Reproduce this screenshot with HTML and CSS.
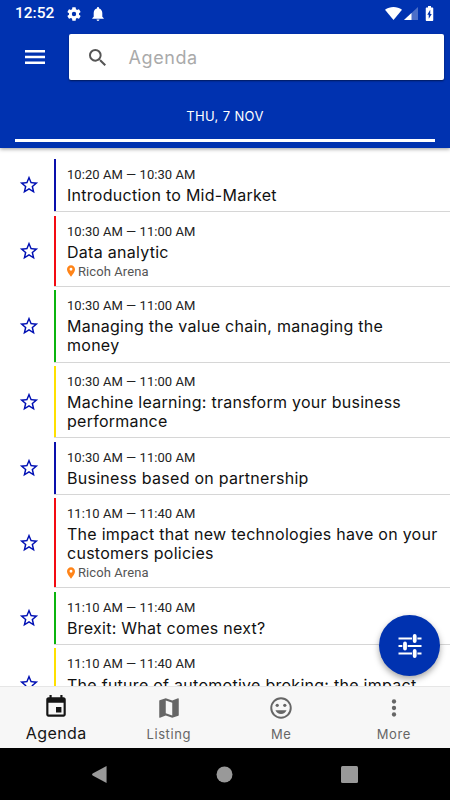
FILE: index.html
```
<!DOCTYPE html>
<html lang="en">
<head>
    <meta charset="UTF-8">
    <title>Agenda</title>
    <link rel="stylesheet" href="styles.css">
</head>
<body>
<svg class="symbols">
    <symbol id="star" viewBox="0 0 24 24"><path d="M22 9.24l-7.19-.62L12 2 9.19 8.63 2 9.24l5.46 4.73L5.82 21 12 17.27 18.18 21l-1.63-7.03L22 9.24zM12 15.4l-3.76 2.27 1-4.28-3.32-2.88 4.38-.38L12 6.1l1.71 4.04 4.38.38-3.32 2.88 1 4.28L12 15.4z"/></symbol>
    <symbol id="pin" viewBox="5 2 14 20"><path d="M12 2C8.13 2 5 5.13 5 9c0 5.25 7 13 7 13s7-7.75 7-13c0-3.87-3.13-7-7-7zm0 9.5a2.5 2.5 0 0 1 0-5 2.5 2.5 0 0 1 0 5z"/></symbol>
</svg>
<div class="phone">
    <header class="header">
        <div class="status">
            <span class="clock">12:52</span>
            <svg class="gear" viewBox="2 2 20 20"><path d="M19.14 12.94c.04-.3.06-.61.06-.94 0-.32-.02-.64-.07-.94l2.03-1.58a.49.49 0 0 0 .12-.61l-1.92-3.32a.488.488 0 0 0-.59-.22l-2.39.96c-.5-.38-1.03-.7-1.62-.94l-.36-2.54a.484.484 0 0 0-.48-.41h-3.84c-.24 0-.43.17-.47.41l-.36 2.54c-.59.24-1.13.57-1.62.94l-2.39-.96c-.22-.08-.47 0-.59.22L2.74 8.87c-.12.21-.08.47.12.61l2.03 1.58c-.05.3-.09.63-.09.94s.02.64.07.94l-2.03 1.58a.49.49 0 0 0-.12.61l1.92 3.32c.12.22.37.29.59.22l2.39-.96c.5.38 1.03.7 1.62.94l.36 2.54c.05.24.24.41.48.41h3.84c.24 0 .44-.17.47-.41l.36-2.54c.59-.24 1.13-.56 1.62-.94l2.39.96c.22.08.47 0 .59-.22l1.92-3.32c.12-.22.07-.47-.12-.61l-2.01-1.58zM12 15.1a3.1 3.1 0 1 1 0-6.2 3.1 3.1 0 0 1 0 6.2z"/></svg>
            <svg class="bell" viewBox="4 2.5 16 19.5"><path d="M12 22c1.1 0 2-.9 2-2h-4c0 1.1.89 2 2 2zm6-6v-5c0-3.07-1.64-5.64-4.5-6.32V4c0-.83-.67-1.5-1.5-1.5s-1.5.67-1.5 1.5v.68C7.63 5.36 6 7.92 6 11v5l-2 2v1h16v-1l-2-2z"/></svg>
            <svg class="wifi" viewBox="0 0 17 13"><path d="M0 2.8C5-.9 12-.9 17 2.8L8.5 13z"/></svg>
            <svg class="signal" viewBox="0 0 14 13"><path opacity=".3" d="M0 13L14 0v13z"/><path d="M0 13l7.5-7v7z"/></svg>
            <svg class="battery" viewBox="7 2 10 20"><path d="M15.67 4H14V2h-4v2H8.33C7.6 4 7 4.6 7 5.33v15.33C7 21.4 7.6 22 8.33 22h7.33c.74 0 1.34-.6 1.34-1.33V5.33C17 4.6 16.4 4 15.67 4zM11 19v-5.5H9L13 7v5.5h2L11 19z"/></svg>
        </div>
        <div class="toolbar">
            <svg class="menu" viewBox="0 0 20 14"><path d="M0 0h20v2.4H0zM0 5.8h20v2.4H0zM0 11.6h20v2.4H0z"/></svg>
            <div class="search">
                <svg viewBox="3 3 17.5 17.5"><path d="M15.5 14h-.79l-.28-.27A6.471 6.471 0 0 0 16 9.5 6.5 6.5 0 1 0 9.5 16c1.61 0 3.09-.59 4.23-1.57l.27.28v.79l5 4.99L20.49 19l-4.99-5zm-6 0C7.01 14 5 11.99 5 9.5S7.01 5 9.5 5 14 7.01 14 9.5 11.99 14 9.5 14z"/></svg>
                <span>Agenda</span>
            </div>
        </div>
        <div class="day"><span>THU, 7 NOV</span></div>
    </header>

    <main class="list">
        <div class="row">
            <svg class="star"><use href="#star"/></svg>
            <div class="session blue">
                <p class="time">10:20 AM — 10:30 AM</p>
                <p class="name">Introduction to Mid-Market</p>
            </div>
        </div>
        <div class="row">
            <svg class="star"><use href="#star"/></svg>
            <div class="session red">
                <p class="time">10:30 AM — 11:00 AM</p>
                <p class="name">Data analytic</p>
                <p class="place"><svg><use href="#pin"/></svg>Ricoh Arena</p>
            </div>
        </div>
        <div class="row">
            <svg class="star"><use href="#star"/></svg>
            <div class="session green">
                <p class="time">10:30 AM — 11:00 AM</p>
                <p class="name">Managing the value chain, managing the<br>money</p>
            </div>
        </div>
        <div class="row">
            <svg class="star"><use href="#star"/></svg>
            <div class="session yellow">
                <p class="time">10:30 AM — 11:00 AM</p>
                <p class="name">Machine learning: transform your business performance</p>
            </div>
        </div>
        <div class="row">
            <svg class="star"><use href="#star"/></svg>
            <div class="session blue">
                <p class="time">10:30 AM — 11:00 AM</p>
                <p class="name">Business based on partnership</p>
            </div>
        </div>
        <div class="row">
            <svg class="star"><use href="#star"/></svg>
            <div class="session red">
                <p class="time">11:10 AM — 11:40 AM</p>
                <p class="name">The impact that new technologies have on your customers policies</p>
                <p class="place"><svg><use href="#pin"/></svg>Ricoh Arena</p>
            </div>
        </div>
        <div class="row">
            <svg class="star"><use href="#star"/></svg>
            <div class="session green">
                <p class="time">11:10 AM — 11:40 AM</p>
                <p class="name">Brexit: What comes next?</p>
            </div>
        </div>
        <div class="row last">
            <svg class="star"><use href="#star"/></svg>
            <div class="session yellow">
                <p class="time">11:10 AM — 11:40 AM</p>
                <p class="name">The future of automotive broking: the impact</p>
            </div>
        </div>
    </main>

    <div class="fab">
        <svg viewBox="0 0 24 24"><path d="M.5 4.5h23M.5 12h23M.5 19.5h23" stroke="#fff" stroke-width="1.8"/><path d="M16.7 0v9M7 7.5v9M16.7 15v9" stroke="#0032b0" stroke-width="5.4"/><path d="M16.7 2v5M7 9.5v5M16.7 17v5" stroke="#fff" stroke-width="3.8" stroke-linecap="round"/></svg>
    </div>

    <nav class="tabs">
        <div class="tab active">
            <svg viewBox="0 0 24 24"><path d="M17 12h-5v5h5v-5zM16 1v2H8V1H6v2H5c-1.11 0-1.99.9-1.99 2L3 19c0 1.1.89 2 2 2h14c1.1 0 2-.9 2-2V5c0-1.1-.9-2-2-2h-1V1h-2zm3 18H5V8h14v11z"/></svg>
            <span>Agenda</span>
        </div>
        <div class="tab">
            <svg viewBox="0 0 24 24"><path d="M20.5 3l-.16.03L15 5.1 9 3 3.36 4.9c-.21.07-.36.25-.36.48V20.5c0 .28.22.5.5.5l.16-.03L9 18.9l6 2.1 5.64-1.9c.21-.07.36-.25.36-.48V3.5c0-.28-.22-.5-.5-.5zM15 19l-6-2.11V5l6 2.11V19z"/></svg>
            <span>Listing</span>
        </div>
        <div class="tab">
            <svg viewBox="0 0 24 24"><circle cx="12" cy="12" r="9" fill="none" stroke="#666" stroke-width="1.8"/><circle cx="8.5" cy="9.5" r="1.5"/><circle cx="15.5" cy="9.5" r="1.5"/><path d="M12 17.5c2.33 0 4.31-1.46 5.11-3.5H6.89c.8 2.04 2.78 3.5 5.11 3.5z"/></svg>
            <span>Me</span>
        </div>
        <div class="tab">
            <svg viewBox="0 0 24 24"><circle cx="12" cy="6" r="2"/><circle cx="12" cy="12" r="2"/><circle cx="12" cy="18" r="2"/></svg>
            <span>More</span>
        </div>
    </nav>
    <div class="navbar">
        <svg viewBox="0 0 16 18"><path d="M15.5 0v18L.7 10Q-.6 9 .7 8z"/></svg>
        <svg viewBox="0 0 16 16"><circle cx="8" cy="8" r="7.5"/></svg>
        <svg viewBox="0 0 17 17"><rect width="17" height="17" rx="1.5"/></svg>
    </div>
</div>
</body>
</html>
```
FILE: styles.css
```
/*reset*/
body,p{
    padding: 0;
    margin: 0;
}
body{
    font-family: Inter, "Liberation Sans", sans-serif;
    background: #fff;
}
svg{
    display: block;
    flex: none;
    fill: currentColor;
}
.symbols{
    position: absolute;
    width: 0;
    height: 0;
}
.phone{
    position: relative;
    display: flex;
    flex-direction: column;
    width: 450px;
    height: 800px;
    overflow: hidden;
}
/*header*/
.header{
    position: relative;
    z-index: 1;
    box-sizing: border-box;
    flex: none;
    height: 148px;
    background: #0032b0;
    color: #fff;
    box-shadow: 0 1px 4px rgba(0,0,0,.4);
}
.status{
    display: flex;
    align-items: center;
    height: 27px;
    padding: 0 16px 0 15px;
}
.clock{
    width: 52px;
    font: 500 15.5px/27px Roboto, sans-serif;
}
.gear{
    width: 14px;
    height: 14px;
}
.bell{
    width: 12px;
    height: 14px;
    margin-left: 11px;
}
.wifi{
    width: 17px;
    height: 13px;
    margin-left: auto;
}
.signal{
    width: 14px;
    height: 13px;
    margin-left: 2px;
}
.battery{
    width: 9px;
    height: 15px;
    margin-left: 7px;
}
.toolbar{
    display: flex;
    align-items: center;
    height: 46px;
    padding: 7px 6px 0 25px;
}
.menu{
    width: 20px;
    height: 14px;
    margin-right: 23.5px;
}
.search{
    display: flex;
    align-items: center;
    flex: 1;
    height: 46px;
    border-radius: 2px;
    background: #fff;
    box-shadow: 0 1px 2px rgba(0,0,0,.5);
    color: #aaa;
    font-size: 18px;
    letter-spacing: .6px;
}
.search svg{
    width: 17px;
    height: 17px;
    margin: 0 22.5px 0 20.5px;
    color: #555;
}
.day{
    box-sizing: border-box;
    height: 62px;
    margin: 0 15px;
    padding-top: 26px;
    border-bottom: 3px solid #fff;
    font-size: 13px;
    line-height: 20px;
    letter-spacing: .35px;
    text-align: center;
}
/*sessions*/
.list{
    flex: 1;
    min-height: 0;
    padding-top: 11px;
    overflow: hidden;
}
.row{
    display: flex;
    align-items: center;
    padding: 0 0 4.4px 18px;
}
.star{
    width: 22px;
    height: 22px;
    margin-right: 14px;
    color: #0010b4;
}
.session{
    flex: 1;
    padding: 8px 8px 5.8px 11px;
    border-left: 2px solid;
    box-shadow: 0 1px 0 #d6d6d6;
}
.blue{ border-color: #0a10ac; }
.red{ border-color: #f30b12; }
.green{ border-color: #0bb40e; }
.yellow{ border-color: #ffe000; }
.time{
    color: #222;
    font: 13px/16px Roboto, sans-serif;
    letter-spacing: .05px;
}
.name{
    padding: 3.1px 0 .9px;
    color: #111;
    font-size: 16px;
    line-height: 18.7px;
    letter-spacing: .27px;
}
.last .name{
    min-height: 37.4px;
}
.place{
    display: flex;
    align-items: center;
    gap: 3px;
    color: #555;
    font: 13px/17.6px Roboto, sans-serif;
    letter-spacing: .08px;
}
.place svg{
    width: 8px;
    height: 12px;
    color: #ff8418;
}
.fab{
    position: absolute;
    z-index: 2;
    right: 10px;
    top: 615px;
    display: flex;
    align-items: center;
    justify-content: center;
    width: 61px;
    height: 61px;
    border-radius: 50%;
    background: #0032b0;
    box-shadow: 0 3px 6px rgba(0,0,0,.35);
}
.fab svg{
    width: 24px;
    height: 24px;
}
/*bottom bars*/
.tabs{
    position: relative;
    box-sizing: border-box;
    display: flex;
    flex: none;
    height: 62px;
    padding-top: 8px;
    border-top: 1px solid #e6e6e6;
    background: #f7f7f7;
}
.tab{
    display: flex;
    flex: 1;
    flex-direction: column;
    align-items: center;
    color: #666;
    font-size: 13px;
    line-height: 20px;
    letter-spacing: .6px;
}
.tab svg{
    width: 26px;
    height: 26px;
    margin-bottom: 3px;
}
.active{
    color: #151515;
    font-size: 16px;
    letter-spacing: .4px;
}
.active svg{
    margin: -1px 0 3px;
}
.navbar{
    display: flex;
    flex: none;
    align-items: center;
    justify-content: space-between;
    box-sizing: border-box;
    height: 52px;
    padding: 0 92px 0 91px;
    background: #000;
    color: #999;
}
.navbar svg{
    width: 17px;
    height: 17px;
}
```
